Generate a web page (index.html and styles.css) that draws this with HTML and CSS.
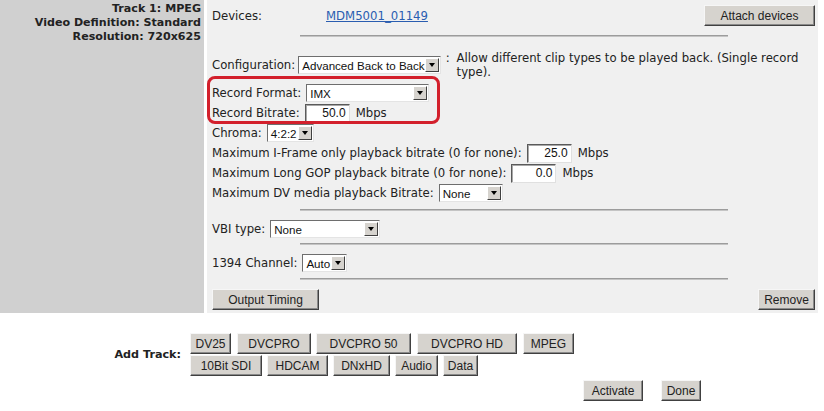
FILE: index.html
```html
<!DOCTYPE html>
<html>
<head>
<meta charset="utf-8">
<link rel="stylesheet" href="styles.css">
</head>
<body>
<div class="track">
  <aside class="info">
    <div>Track 1: MPEG</div>
    <div>Video Definition: Standard</div>
    <div>Resolution: 720x625</div>
  </aside>
  <section class="panel">
    <div class="row devices">
      <span class="dev-label">Devices:</span>
      <a class="dev-link" href="#">MDM5001_01149</a>
      <span class="grow"></span>
      <button class="btn attach">Attach devices</button>
    </div>
    <div class="sep sep-a"></div>
    <div class="row config">
      <span>Configuration:</span>
      <span class="sel w-config"><span class="val">Advanced Back to Back</span><span class="arr"></span></span>
      <span class="colon">:</span>
      <span class="desc">Allow different clip types to be played back. (Single record type).</span>
    </div>
    <div class="row line first">
      <span>Record Format:</span>
      <span class="sel w-imx"><span class="val">IMX</span><span class="arr"></span></span>
    </div>
    <div class="row line">
      <span>Record Bitrate:</span>
      <span class="inp">50.0</span>
      <span class="unit">Mbps</span>
    </div>
    <div class="row line">
      <span>Chroma:</span>
      <span class="sel w-chroma"><span class="val">4:2:2</span><span class="arr"></span></span>
    </div>
    <div class="row line">
      <span>Maximum I-Frame only playback bitrate (0 for none):</span>
      <span class="inp">25.0</span>
      <span class="unit">Mbps</span>
    </div>
    <div class="row line">
      <span>Maximum Long GOP playback bitrate (0 for none):</span>
      <span class="inp">0.0</span>
      <span class="unit">Mbps</span>
    </div>
    <div class="row line">
      <span>Maximum DV media playback Bitrate:</span>
      <span class="sel w-dv"><span class="val">None</span><span class="arr"></span></span>
    </div>
    <div class="sep sep-b"></div>
    <div class="row line spaced">
      <span>VBI type:</span>
      <span class="sel w-vbi"><span class="val">None</span><span class="arr"></span></span>
    </div>
    <div class="sep sep-c"></div>
    <div class="row line spaced">
      <span>1394 Channel:</span>
      <span class="sel w-auto"><span class="val">Auto</span><span class="arr"></span></span>
    </div>
    <div class="sep sep-d"></div>
    <div class="row actions">
      <button class="btn timing">Output Timing</button>
      <span class="grow"></span>
      <button class="btn remove">Remove</button>
    </div>
    <div class="annot"></div>
  </section>
</div>

<div class="addtrack">
  <div class="add-label">Add Track:</div>
  <div class="add-buttons">
    <div class="add-row">
      <button class="btn b-dv25">DV25</button>
      <button class="btn b-dvcpro">DVCPRO</button>
      <button class="btn b-dvcpro50">DVCPRO 50</button>
      <button class="btn b-dvcprohd">DVCPRO HD</button>
      <button class="btn b-mpeg">MPEG</button>
    </div>
    <div class="add-row">
      <button class="btn b-sdi">10Bit SDI</button>
      <button class="btn b-hdcam">HDCAM</button>
      <button class="btn b-dnxhd">DNxHD</button>
      <button class="btn b-audio">Audio</button>
      <button class="btn b-data">Data</button>
    </div>
  </div>
</div>

<div class="final">
  <button class="btn b-activate">Activate</button>
  <button class="btn b-done">Done</button>
</div>
</body>
</html>
```

FILE: styles.css
```css
html, body {
  margin: 0;
  padding: 0;
  background: #ffffff;
}
body {
  font-family: "DejaVu Sans", Verdana, sans-serif;
  font-size: 11.7px;
  color: #222222;
  width: 824px;
}

.track {
  display: flex;
  gap: 3px;
  width: 818px;
}

.info {
  width: 201px;
  flex: none;
  background: #d0d0d0;
  padding: 2px 3px 0 0;
  text-align: right;
  font-weight: bold;
  font-size: 11.1px;
  line-height: 14px;
}

.panel {
  position: relative;
  flex: 1;
  background: #f0f0f0;
  padding: 5px 3px 3px 5px;
}

.row {
  display: flex;
  align-items: center;
  gap: 5px;
  white-space: nowrap;
}

.grow { flex: 1; }

.devices { height: 21px; }
.dev-label { width: 109px; }
.dev-link {
  color: #2a5db0;
  text-decoration: underline;
}

.sep {
  width: 428px;
  height: 1px;
  margin-left: auto;
  margin-right: auto;
  background: #9c9c9c;
  border-bottom: 1px solid #c4c4c4;
}
.sep-a { margin-top: 9px; }
.sep-b { margin-top: 6px; }
.sep-c { margin-top: 4px; }
.sep-d { margin-top: 5px; }

.config {
  margin-top: 14px;
  height: 28px;
  gap: 3px;
}
.colon { margin-left: 2px; align-self: flex-start; line-height: 14px; }
.desc {
  white-space: normal;
  line-height: 14px;
  padding-left: 4px;
  padding-right: 2px;
  align-self: flex-start;
}

.line { height: 20px; }
.line.first { margin-top: 4px; }
.line.spaced { margin-top: 8px; }
.unit { margin-left: 1px; }

.sel {
  display: inline-flex;
  align-items: center;
  box-sizing: border-box;
  height: 18px;
  background: #ffffff;
  border: 1px solid;
  border-color: #6e6e6e #e4e4e4 #e4e4e4 #6e6e6e;
  font-family: "Liberation Sans", Arial, sans-serif;
  font-size: 11.6px;
  color: #111111;
}
.val {
  flex: 1;
  padding-left: 3px;
  overflow: hidden;
}
.arr {
  position: relative;
  box-sizing: border-box;
  width: 14px;
  height: 14px;
  margin-right: 1px;
  background: #d6d3ce;
  border: 1px solid;
  border-color: #ffffff #404040 #404040 #ffffff;
}
.arr::after {
  content: "";
  position: absolute;
  left: 3px;
  top: 4px;
  border-left: 3.5px solid transparent;
  border-right: 3.5px solid transparent;
  border-top: 4px solid #000000;
}
.w-config { width: 146px; }
.w-imx { width: 123px; }
.w-chroma { width: 47px; }
.w-dv { width: 64px; }
.w-vbi { width: 110px; }
.w-auto { width: 45px; }

.inp {
  display: inline-block;
  box-sizing: border-box;
  width: 45px;
  height: 19px;
  line-height: 16px;
  background: #ffffff;
  border: 1px solid;
  border-color: #5a5a5a #e0e0e0 #e0e0e0 #5a5a5a;
  box-shadow: inset 1px 1px 0 #a8a8a8;
  text-align: right;
  padding-right: 3px;
  font-family: "Liberation Sans", Arial, sans-serif;
  font-size: 12px;
  color: #111111;
}

.actions {
  margin-top: 9px;
  height: 21px;
}

.btn {
  box-sizing: border-box;
  height: 21px;
  padding: 0;
  margin: 0;
  background: #d6d3ce;
  border: 1px solid;
  border-color: #f6f6f6 #404040 #404040 #f6f6f6;
  box-shadow: inset -1px -1px 0 #8a8a8a;
  font-family: "Liberation Sans", Arial, sans-serif;
  font-size: 12px;
  color: #222222;
  text-align: center;
  white-space: nowrap;
}
.attach { width: 111px; }
.timing { width: 107px; }
.remove { width: 57px; }

.annot {
  position: absolute;
  left: 0;
  top: 76px;
  width: 233px;
  height: 48px;
  box-sizing: border-box;
  border: 3px solid #d3202c;
  border-radius: 8px;
}

.addtrack {
  display: flex;
  align-items: center;
  margin-top: 20px;
  gap: 9px;
}
.add-label {
  width: 181px;
  text-align: right;
  font-weight: bold;
  font-size: 11.2px;
}
.add-buttons {
  display: flex;
  flex-direction: column;
  gap: 1px;
}
.add-row {
  display: flex;
  gap: 5px;
}
.b-dv25 { width: 41px; }
.b-dvcpro { width: 74px; margin-left: 1px; }
.b-dvcpro50 { width: 95px; }
.b-dvcprohd { width: 100px; margin-left: 1px; }
.b-mpeg { width: 51px; margin-left: 1px; }
.b-sdi { width: 72px; }
.b-hdcam { width: 61px; }
.b-dnxhd { width: 57px; }
.b-audio { width: 43px; }
.b-data { width: 35px; }

.final {
  display: flex;
  gap: 18px;
  margin-top: 4px;
  padding-left: 583px;
}
.b-activate { width: 60px; }
.b-done { width: 40px; }
```
